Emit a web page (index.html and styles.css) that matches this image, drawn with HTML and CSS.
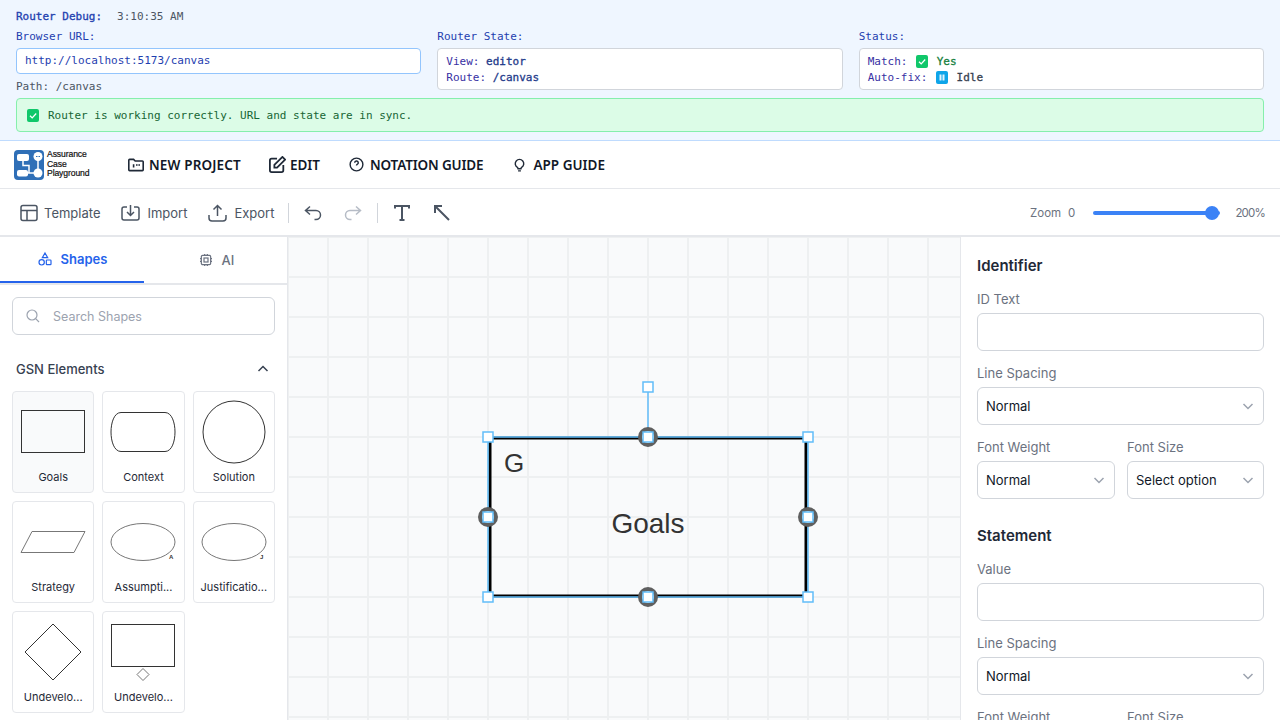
FILE: index.html
```html
<!DOCTYPE html>
<html lang="en">
<head>
    <meta charset="UTF-8">
    <title>Assurance Case Playground</title>
    <link rel="stylesheet" href="styles.css">
</head>
<body>

    <!-- Router debug panel -->
    <div class="debug">
        <div class="debug-title"><b>Router Debug:</b><span>3:10:35 AM</span></div>
        <div class="debug-cols">
            <div>
                <div class="debug-label">Browser URL:</div>
                <div class="debug-url">http://localhost:5173/canvas</div>
                <div class="debug-path">Path: /canvas</div>
            </div>
            <div>
                <div class="debug-label">Router State:</div>
                <div class="debug-box">
                    <div>View: <b>editor</b></div>
                    <div>Route: <b>/canvas</b></div>
                </div>
            </div>
            <div>
                <div class="debug-label">Status:</div>
                <div class="debug-box">
                    <div>Match: <span class="emoji green"><svg viewBox="0 0 12 13"><path d="M3 6.700l2.200 2.200L9.200 4.500" fill="none" stroke="#fff" stroke-width="1.300"/></svg></span> <span class="yes">Yes</span></div>
                    <div>Auto-fix: <span class="emoji blue"><svg viewBox="0 0 12 13"><path d="M3.500 3.500h2v6h-2zM6.500 3.500h2v6h-2z" fill="#dff3fd"/></svg></span> <span class="idle">Idle</span></div>
                </div>
            </div>
        </div>
        <div class="debug-ok"><span class="emoji green"><svg viewBox="0 0 12 13"><path d="M3 6.700l2.200 2.200L9.200 4.500" fill="none" stroke="#fff" stroke-width="1.300"/></svg></span>Router is working correctly. URL and state are in sync.</div>
    </div>

    <!-- App header -->
    <div class="header">
        <div class="logo">
            <svg width="30" height="30" viewBox="0 0 30 30">
                <rect width="30" height="30" rx="4" fill="#2f6fb7"/>
                <rect x="3" y="4" width="12" height="7" rx="2" fill="#fff"/>
                <rect x="3" y="20" width="11" height="6.500" rx="2" fill="#fff"/>
                <circle cx="24" cy="6.500" r="4.500" fill="#fff"/>
                <circle cx="24" cy="23" r="4.500" fill="#fff"/>
                <path d="M9 11v4.500h6V23M24 10v10M14 23h7" fill="none" stroke="#fff" stroke-width="1.500"/>
                <path d="M22 6.500h4" stroke="#2f6fb7" stroke-width="1" stroke-dasharray="1 .5"/>
            </svg>
            <div class="logo-text">Assurance<br>Case<br>Playground</div>
        </div>
        <div class="nav">
            <a><svg width="16" height="16" viewBox="2 3 20 18"><path d="M3 6a1 1 0 0 1 1-1h5l2 2h9a1 1 0 0 1 1 1v10a1 1 0 0 1-1 1H4a1 1 0 0 1-1-1z"/><path d="M9 11v4M13 11v2M16 11v2"/></svg>NEW PROJECT</a>
            <a><svg width="17" height="17" viewBox="3 2 19 19"><path d="M12 5H6a2 2 0 0 0-2 2v11a2 2 0 0 0 2 2h11a2 2 0 0 0 2-2v-6"/><path d="M9 15v-3l9-9 3 3-9 9z"/></svg>EDIT</a>
            <a><svg width="17" height="17" viewBox="0 0 24 24"><circle cx="12" cy="12" r="9"/><path d="M9.500 9.500a2.500 2.500 0 1 1 3.500 2.300c-.7.4-1 .9-1 1.700M12 17v.01"/></svg>NOTATION GUIDE</a>
            <a><svg width="17" height="17" viewBox="0 0 24 24"><path d="M9 16a6 6 0 1 1 6 0c-.6.5-1 1-1 2h-4c0-1-.4-1.500-1-2zM10 21h4"/></svg>APP GUIDE</a>
        </div>
    </div>

    <!-- Toolbar -->
    <div class="toolbar">
        <a class="tool"><svg width="18" height="18" viewBox="0 0 18 18"><rect x="1" y="1.500" width="16" height="15" rx="2"/><path d="M1 6.500h16M7 6.500v10"/></svg>Template</a>
        <a class="tool"><svg width="19" height="18" viewBox="0 0 19 18"><path d="M6 3H3a2 2 0 0 0-2 2v9a2 2 0 0 0 2 2h13a2 2 0 0 0 2-2V5a2 2 0 0 0-2-2h-3"/><path d="M9.500 1v10M6 8l3.500 3.500L13 8"/></svg>Import</a>
        <a class="tool"><svg width="19" height="18" viewBox="0 0 19 18"><path d="M1 11v3a3 3 0 0 0 3 3h11a3 3 0 0 0 3-3v-3"/><path d="M9.500 12V1.500M5.500 5.500l4-4 4 4"/></svg>Export</a>
        <span class="divider"></span>
        <a class="tool-icon"><svg width="18" height="18" viewBox="0 0 18 18"><path d="M6 10.500L1.500 6.500 6 2.500M1.500 6.500H12a4.500 4.500 0 0 1 0 9h-1.500"/></svg></a>
        <a class="tool-icon off"><svg width="18" height="18" viewBox="0 0 18 18"><path d="M12 10.500l4.500-4-4.500-4M16.500 6.500H6a4.500 4.500 0 0 0 0 9h1.500"/></svg></a>
        <span class="divider"></span>
        <a class="tool-icon bold"><svg width="18" height="18" viewBox="0 0 18 18"><path d="M2 4.500V2h14v2.500M9 2v14M6.500 16h5"/></svg></a>
        <a class="tool-icon bold"><svg width="18" height="18" viewBox="0 0 18 18"><path d="M16 16L2 2M2 9V2h7"/></svg></a>
        <div class="zoom">
            <span>Zoom</span><span class="zoom-min">0</span>
            <div class="slider"><i></i></div>
            <span class="zoom-max">200%</span>
        </div>
    </div>

    <div class="main">
        <!-- Left sidebar -->
        <div class="sidebar">
            <div class="tabs">
                <div class="tab active"><svg width="16" height="16" viewBox="0 0 24 24"><path d="M12 3l4 7H8z"/><circle cx="7" cy="17" r="4"/><rect x="14" y="13.500" width="7" height="7" rx="1"/></svg>Shapes</div>
                <div class="tab"><svg width="16" height="16" viewBox="0 0 24 24"><rect x="5" y="5" width="14" height="14" rx="2"/><rect x="9" y="9" width="6" height="6"/><path d="M3 10h2M3 14h2M19 10h2M19 14h2M10 3v2M14 3v2M10 19v2M14 19v2"/></svg>AI</div>
            </div>
            <div class="search">
                <svg width="16" height="16" viewBox="0 0 24 24"><circle cx="10.500" cy="10.500" r="7.500"/><path d="M21 21l-5-5"/></svg>
                <span>Search Shapes</span>
            </div>
            <div class="group-head">
                <span>GSN Elements</span>
                <svg width="14" height="14" viewBox="0 0 14 14"><path d="M2.500 9L7 4.500 11.500 9"/></svg>
            </div>
            <div class="shapes">
                <div class="card hover">
                    <svg viewBox="0 0 82 78"><rect x="9.500" y="19.500" width="63" height="42"/></svg>
                    <div class="card-name">Goals</div>
                </div>
                <div class="card">
                    <svg viewBox="0 0 82 78"><path d="M19 21.500H63C70 21.500 73 32 73 41S70 60.500 63 60.500H19C12 60.500 9 50 9 41S12 21.500 19 21.500Z"/></svg>
                    <div class="card-name">Context</div>
                </div>
                <div class="card">
                    <svg viewBox="0 0 82 78"><circle cx="41" cy="41" r="31"/></svg>
                    <div class="card-name">Solution</div>
                </div>
                <div class="card">
                    <svg viewBox="0 0 82 78"><path class="thin" d="M20 30.500H73L62 51.500H9Z"/></svg>
                    <div class="card-name">Strategy</div>
                </div>
                <div class="card">
                    <svg viewBox="0 0 82 78"><ellipse class="thin" cx="41" cy="41" rx="32" ry="18.500"/><text x="67" y="58">A</text></svg>
                    <div class="card-name">Assumpti...</div>
                </div>
                <div class="card">
                    <svg viewBox="0 0 82 78"><ellipse class="thin" cx="41" cy="41" rx="32" ry="18.500"/><text x="67" y="58">J</text></svg>
                    <div class="card-name">Justificatio...</div>
                </div>
                <div class="card">
                    <svg viewBox="0 0 82 78"><path d="M41 13L69 41 41 69 13 41Z"/></svg>
                    <div class="card-name">Undevelo...</div>
                </div>
                <div class="card">
                    <svg viewBox="0 0 82 78"><rect x="9.500" y="13.500" width="63" height="42"/><path class="thin" d="M41 57.500L47 63.500 41 69.500 35 63.500Z"/></svg>
                    <div class="card-name">Undevelo...</div>
                </div>
            </div>
        </div>

        <!-- Canvas -->
        <div class="canvas">
            <svg class="diagram" viewBox="288 237 672 483">
                <rect x="490" y="438" width="316" height="158" fill="none" stroke="#000" stroke-width="3"/>
                <text x="504" y="472" class="node-id">G</text>
                <text x="648" y="533" class="node-title" text-anchor="middle">Goals</text>
                <rect x="488" y="437" width="320" height="160" fill="none" stroke="#62bdf9" stroke-width="1.500"/>
                <path d="M648 387V437" stroke="#62bdf9" stroke-width="1.500"/>
                <g fill="#fff" stroke="#5f5f5f" stroke-width="4">
                    <circle cx="648" cy="437" r="8"/>
                    <circle cx="488" cy="517" r="8"/>
                    <circle cx="808" cy="517" r="8"/>
                    <circle cx="648" cy="597" r="8"/>
                </g>
                <g fill="#fff" stroke="#62bdf9" stroke-width="1.500">
                    <rect x="643" y="382" width="10" height="10"/>
                    <rect x="483" y="432" width="10" height="10"/>
                    <rect x="643" y="432" width="10" height="10"/>
                    <rect x="803" y="432" width="10" height="10"/>
                    <rect x="483" y="512" width="10" height="10"/>
                    <rect x="803" y="512" width="10" height="10"/>
                    <rect x="483" y="592" width="10" height="10"/>
                    <rect x="643" y="592" width="10" height="10"/>
                    <rect x="803" y="592" width="10" height="10"/>
                </g>
            </svg>
        </div>

        <!-- Right properties panel -->
        <div class="props">
            <div class="props-title">Identifier</div>
            <div class="field-label">ID Text</div>
            <div class="input"></div>
            <div class="field-label">Line Spacing</div>
            <div class="input select">Normal<svg width="12" height="12" viewBox="0 0 12 12"><path d="M1.500 4L6 8.500 10.500 4"/></svg></div>
            <div class="field-row">
                <div class="field-col first">
                    <div class="field-label">Font Weight</div>
                    <div class="input select">Normal<svg width="12" height="12" viewBox="0 0 12 12"><path d="M1.500 4L6 8.500 10.500 4"/></svg></div>
                </div>
                <div class="field-col">
                    <div class="field-label">Font Size</div>
                    <div class="input select">Select option<svg width="12" height="12" viewBox="0 0 12 12"><path d="M1.500 4L6 8.500 10.500 4"/></svg></div>
                </div>
            </div>
            <div class="props-title second">Statement</div>
            <div class="field-label">Value</div>
            <div class="input"></div>
            <div class="field-label">Line Spacing</div>
            <div class="input select">Normal<svg width="12" height="12" viewBox="0 0 12 12"><path d="M1.500 4L6 8.500 10.500 4"/></svg></div>
            <div class="field-row">
                <div class="field-col first">
                    <div class="field-label">Font Weight</div>
                </div>
                <div class="field-col">
                    <div class="field-label">Font Size</div>
                </div>
            </div>
        </div>
    </div>

</body>
</html>
```

FILE: styles.css
```css
* {
    box-sizing: border-box;
}

html, body {
    height: 720px;
}

body {
    margin: 0;
    overflow: hidden;
    display: flex;
    flex-direction: column;
    font-family: Inter, "Noto Sans", sans-serif;
    background-color: #fff;
}

svg {
    flex: none;
}

/* Router debug panel */
.debug {
    height: 141px;
    flex: none;
    padding: 10px 16px 0;
    background-color: #eff6ff;
    border-bottom: 1px solid #bfdbfe;
    font-family: "DejaVu Sans Mono", monospace;
    font-size: 11px;
    line-height: 13px;
    color: #3730a3;
}

.debug-title {
    display: flex;
    gap: 15px;
    color: #4b5563;
}

.debug-title b {
    font-weight: normal;
    -webkit-text-stroke: 0.3px #1e40af;
    color: #1e40af;
}

.debug-cols {
    display: grid;
    grid-template-columns: repeat(3, 1fr);
    gap: 16px;
    margin-top: 7px;
}

.debug-label {
    margin-bottom: 5px;
    color: #1e40af;
}

.debug-url {
    height: 26px;
    padding: 0 8px;
    line-height: 24px;
    background-color: #fff;
    border: 1px solid #93c5fd;
    border-radius: 4px;
    color: #1e40af;
}

.debug-path {
    margin-top: 6px;
    color: #4b5563;
}

.debug-box {
    height: 42px;
    padding: 5px 8px;
    line-height: 16px;
    background-color: #fff;
    border: 1px solid #d1d5db;
    border-radius: 4px;
    color: #3730a3;
}

.debug-box b {
    font-weight: normal;
    -webkit-text-stroke: 0.3px #1e3a8a;
    color: #1e3a8a;
}

.emoji {
    display: inline-block;
    width: 12px;
    height: 13px;
    margin: 0 2px;
    vertical-align: -3px;
    border-radius: 2px;
}

.emoji svg {
    display: block;
    width: 12px;
    height: 13px;
}

.green {
    background-color: #10c76a;
}

.blue {
    background-color: #0ea5e9;
}

.yes {
    color: #15803d;
    -webkit-text-stroke: 0.3px #15803d;
}

.idle {
    color: #374151;
    -webkit-text-stroke: 0.3px #374151;
}

.debug-ok {
    display: flex;
    align-items: center;
    gap: 7px;
    height: 34px;
    margin-top: 5px;
    padding: 0 8px;
    background-color: #dcfce7;
    border: 1px solid #86efac;
    border-radius: 4px;
    color: #166534;
}

/* Header */
.header {
    height: 48px;
    flex: none;
    display: flex;
    align-items: center;
    padding-left: 14px;
    border-bottom: 1px solid #e5e7eb;
}

.logo {
    display: flex;
    align-items: center;
    gap: 3px;
    width: 114px;
}

.logo-text {
    font-family: "Liberation Sans", sans-serif;
    font-size: 8.600px;
    line-height: 9.500px;
    color: #111;
    -webkit-text-stroke: 0.2px #111;
    letter-spacing: -0.1px;
}

.nav {
    display: flex;
    gap: 28px;
}

.nav a {
    display: flex;
    align-items: center;
    gap: 5px;
    font-family: "Noto Sans", sans-serif;
    font-size: 13.500px;
    font-weight: 600;
    color: #111827;
}

.nav a:first-child {
    letter-spacing: 0.15px;
}

.nav a:nth-child(2) {
    gap: 4px;
}

.nav a:nth-child(3) {
    letter-spacing: -0.15px;
}

.nav svg {
    fill: none;
    stroke: #1f2937;
    stroke-width: 2;
}

/* Toolbar */
.toolbar {
    height: 48px;
    flex: none;
    display: flex;
    align-items: center;
    padding: 2px 15px 0 20px;
    border-bottom: 2px solid #e5e7eb;
}

.tool {
    display: flex;
    align-items: center;
    gap: 7px;
    margin-right: 21px;
    font-size: 13px;
    color: #4b5563;
}

.tool:first-child {
    gap: 6px;
}

.tool svg, .tool-icon svg {
    display: block;
    fill: none;
    stroke: #4b5563;
    stroke-width: 1.500;
}

.tool-icon {
    margin-right: 22px;
}

.tool-icon.off svg {
    stroke: #b6bcc6;
}

.tool-icon.bold svg {
    stroke-width: 2;
}

.divider {
    width: 1px;
    height: 20px;
    margin: 0 15px 0 -7px;
    background-color: #d1d5db;
}

.zoom {
    display: flex;
    align-items: center;
    margin-left: auto;
    font-size: 11.500px;
    color: #6b7280;
}

.zoom-min {
    margin-left: 7px;
}

.zoom-max {
    letter-spacing: -0.8px;
}

.slider {
    position: relative;
    width: 127px;
    height: 4px;
    margin: 0 15px 0 18px;
    background-color: #3b82f6;
    border-radius: 2px;
}

.slider i {
    position: absolute;
    right: 1px;
    top: -5px;
    width: 14px;
    height: 14px;
    border-radius: 50%;
    background-color: #3b82f6;
}

/* Main area */
.main {
    flex: 1;
    min-height: 0;
    display: flex;
}

.sidebar {
    width: 288px;
    flex: none;
    border-right: 1px solid #e5e7eb;
    overflow: hidden;
}

.tabs {
    display: flex;
    height: 48px;
    margin-right: -1px;
    border-bottom: 2px solid #e5e7eb;
}

.tab {
    flex: 1;
    display: flex;
    align-items: center;
    justify-content: center;
    gap: 8px;
    font-size: 13px;
    font-weight: 500;
    color: #6b7280;
}

.tab svg {
    fill: none;
    stroke: #6b7280;
    stroke-width: 1.800;
}

.tab.active {
    color: #2563eb;
    font-weight: 600;
    border-bottom: 2px solid #2563eb;
}

.tab.active svg {
    stroke: #2563eb;
}

.search {
    display: flex;
    align-items: center;
    gap: 12px;
    height: 38px;
    margin: 12px 12px 0;
    padding: 0 12px;
    border: 1px solid #d1d5db;
    border-radius: 6px;
    font-size: 12.500px;
    color: #9ca3af;
}

.search svg {
    fill: none;
    stroke: #9ca3af;
    stroke-width: 1.800;
}

.group-head {
    display: flex;
    align-items: center;
    justify-content: space-between;
    margin: 25px 17px 0 16px;
    height: 18px;
    font-size: 13px;
    font-weight: 500;
    color: #374151;
}

.group-head svg {
    fill: none;
    stroke: #374151;
    stroke-width: 1.500;
}

.shapes {
    display: grid;
    grid-template-columns: repeat(3, minmax(0, 1fr));
    gap: 8px;
    margin: 13px 12px 0;
}

.card {
    height: 102px;
    border: 1px solid #e5e7eb;
    border-radius: 4px;
}

.card.hover {
    background-color: #f9fafb;
}

.card svg {
    display: block;
    width: 82px;
    height: 78px;
    margin: -1px 0 0 -1px;
    fill: none;
    stroke: #333;
    stroke-width: 1;
}

.card svg .thin {
    stroke: #777;
}

.card svg text {
    font-family: "Liberation Sans", sans-serif;
    font-size: 6px;
    font-weight: bold;
    fill: #333;
    stroke: none;
}

.card-name {
    font-size: 11px;
    line-height: 16px;
    color: #1f2937;
    text-align: center;
    white-space: nowrap;
}

/* Canvas */
.canvas {
    flex: 1;
    min-width: 0;
    background-color: #f9fafb;
    background-image:
        linear-gradient(to right, #eef0f1 2px, transparent 2px),
        linear-gradient(to bottom, #eef0f1 2px, transparent 2px);
    background-size: 40px 40px;
    background-position: -1px -1px;
}

.diagram {
    display: block;
    width: 100%;
    height: 100%;
}

.node-id, .node-title {
    font-family: "Liberation Sans", sans-serif;
    fill: #333;
}

.node-id {
    font-size: 26px;
}

.node-title {
    font-size: 28px;
}

/* Properties panel */
.props {
    width: 320px;
    flex: none;
    padding: 19px 16px 0;
    border-left: 1px solid #e5e7eb;
    overflow: hidden;
}

.props-title {
    font-size: 15px;
    line-height: 20px;
    font-weight: 600;
    color: #1f2937;
    margin-bottom: 15px;
}

.props-title.second {
    margin-top: 13px;
}

.field-label {
    font-size: 13px;
    line-height: 16px;
    color: #6b7280;
    margin-bottom: 6px;
}

.input {
    height: 38px;
    margin-bottom: 14px;
    border: 1px solid #d1d5db;
    border-radius: 6px;
}

.select {
    display: flex;
    align-items: center;
    justify-content: space-between;
    padding: 0 9px 0 8px;
    font-size: 13px;
    color: #111827;
}

.select svg {
    fill: none;
    stroke: #9ca3af;
    stroke-width: 1.500;
}

.field-row {
    display: flex;
    gap: 12px;
}

.field-col {
    flex: 1;
    min-width: 0;
}

.field-col.first {
    flex: none;
    width: 138px;
}
```
